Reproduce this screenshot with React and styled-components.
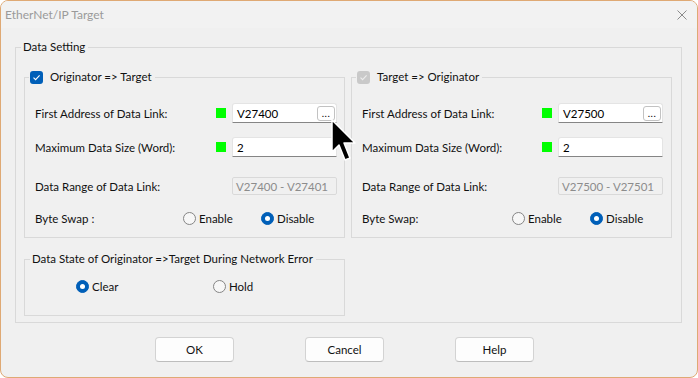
import React from "react";
import styled, { createGlobalStyle } from "styled-components";

const GlobalStyle = createGlobalStyle`
  html, body {
    margin: 0;
    padding: 0;
    background: #ffffff;
  }
  body {
    font-family: Lato, "Liberation Sans", sans-serif;
    font-size: 11.5px;
    color: #111111;
  }
  * {
    box-sizing: border-box;
  }
`;

const Window = styled.div`
  position: relative;
  width: 698px;
  height: 378px;
  border: 1px solid #dfa974;
  border-radius: 8px;
  background: #f0f0f0;
  display: flex;
  flex-direction: column;
  overflow: hidden;
`;

const TitleBar = styled.div`
  height: 27px;
  flex: none;
  display: flex;
  align-items: center;
  justify-content: space-between;
  padding: 0 10px 0 4px;
  background: #f2f2f2;
  font-size: 12px;
`;

const Title = styled.span`
  color: #9a9a9a;
`;

const Content = styled.div`
  padding: 0 15px 0 14px;
`;

const Group = styled.fieldset`
  margin: ${(p) => p.$mt || 0}px 0 0 0;
  padding: 0;
  border: 1px solid #d9d9d9;
  min-width: 0;
  width: ${(p) => (p.$w ? `${p.$w}px` : "auto")};
`;

const Legend = styled.legend`
  margin-left: ${(p) => p.$ml}px;
  padding: 0 3px 0 ${(p) => p.$pl}px;
  height: 16px;
  line-height: 16px;
`;

const LegendInner = styled.span`
  display: inline-flex;
  align-items: center;
  gap: 7px;
  height: 16px;
`;

const GroupBody = styled.div`
  padding: ${(p) => p.$pad};
`;

const Columns = styled.div`
  display: grid;
  grid-template-columns: 321px 321px;
  column-gap: 6px;
`;

const Row = styled.div`
  display: flex;
  align-items: center;
  height: ${(p) => p.$h}px;
  margin-top: ${(p) => p.$mt || 0}px;
`;

const Label = styled.span`
  flex: none;
  width: ${(p) => p.$w}px;
  white-space: nowrap;
`;

const Led = styled.span`
  flex: none;
  width: 10px;
  height: 10px;
  margin-right: 6px;
  background: #00ff00;
  visibility: ${(p) => (p.$off ? "hidden" : "visible")};
`;

const TextBox = styled.div`
  width: 105px;
  height: 20px;
  display: flex;
  align-items: center;
  justify-content: space-between;
  padding: 0 1px 0 4px;
  background: #ffffff;
  border: 1px solid #e4e4e4;
  border-bottom-color: #858585;
  border-radius: 3px 3px 0 0;
  color: #000000;
`;

const BrowseButton = styled.span`
  width: 18px;
  height: 15px;
  display: flex;
  align-items: flex-end;
  justify-content: center;
  padding-bottom: 2px;
  border: 1px solid #c2c2c2;
  border-radius: 3px;
  background: #ffffff;
  font-size: 10px;
  line-height: 10px;
  letter-spacing: 0.5px;
`;

const ReadOnlyBox = styled.div`
  width: 105px;
  height: 18px;
  display: flex;
  align-items: center;
  padding-left: 3px;
  border: 1px solid #d9d9d9;
  border-radius: 2px;
  color: #8c8c8c;
  white-space: nowrap;
`;

const RadioItem = styled.label`
  flex: none;
  display: flex;
  align-items: center;
  gap: 3px;
  width: ${(p) => p.$w}px;
`;

const RadioDot = styled.span`
  flex: none;
  width: 13px;
  height: 13px;
  border-radius: 50%;
  display: flex;
  align-items: center;
  justify-content: center;
  background: ${(p) => (p.$on ? "#005fb8" : "#f7f7f7")};
  border: 1px solid ${(p) => (p.$on ? "#005fb8" : "#858585")};

  &::after {
    content: "";
    display: ${(p) => (p.$on ? "block" : "none")};
    width: 5px;
    height: 5px;
    border-radius: 50%;
    background: #ffffff;
  }
`;

const CheckBox = styled.span`
  flex: none;
  width: 13px;
  height: 13px;
  border-radius: 3px;
  display: flex;
  align-items: center;
  justify-content: center;
  background: ${(p) => (p.$disabled ? "#c9c9c9" : "#005fb8")};
`;

const ButtonRow = styled.div`
  display: flex;
  gap: 71px;
  padding-left: 140px;
  margin-top: 14px;
`;

const Button = styled.button`
  width: 79px;
  height: 25px;
  padding: 0;
  background: #fdfdfd;
  border: 1px solid #d3d3d3;
  border-bottom-color: #bdbdbd;
  border-radius: 4px;
  font-family: inherit;
  font-size: 11.5px;
  color: #111111;
`;

const Pointer = styled.svg`
  position: absolute;
  left: 329px;
  top: 117px;
`;

const Radio = ({ on, w, children }) => (
  <RadioItem $w={w}>
    <RadioDot $on={on} />
    {children}
  </RadioItem>
);

const Check = ({ disabled }) => (
  <CheckBox $disabled={disabled}>
    <svg width="9" height="9" viewBox="0 0 9 9">
      <path
        d="M1.5 4.6 L3.6 6.6 L7.6 2.4"
        fill="none"
        stroke={disabled ? "#ededed" : "#ffffff"}
        strokeWidth="1.1"
      />
    </svg>
  </CheckBox>
);

const SettingColumn = ({ title, disabled, first, range, swapLabel, ledW, radioW }) => (
  <Group>
    <Legend $ml={4} $pl={1}>
      <LegendInner>
        <Check disabled={disabled} />
        {title}
      </LegendInner>
    </Legend>
    <GroupBody $pad="18px 6px 11px 10px">
      <Row $h={20}>
        <Label $w={ledW}>First Address of Data Link:</Label>
        <Led />
        <TextBox>
          {first}
          <BrowseButton>...</BrowseButton>
        </TextBox>
      </Row>
      <Row $h={20} $mt={14}>
        <Label $w={ledW}>Maximum Data Size (Word):</Label>
        <Led />
        <TextBox>2</TextBox>
      </Row>
      <Row $h={18} $mt={20}>
        <Label $w={ledW}>Data Range of Data Link:</Label>
        <Led $off />
        <ReadOnlyBox>{range}</ReadOnlyBox>
      </Row>
      <Row $h={16} $mt={15}>
        <Label $w={radioW}>{swapLabel}</Label>
        <Radio w={78}>Enable</Radio>
        <Radio on w={78}>
          Disable
        </Radio>
      </Row>
    </GroupBody>
  </Group>
);

export default function App() {
  return (
    <>
      <GlobalStyle />
      <Window>
        <TitleBar>
          <Title>EtherNet/IP Target</Title>
          <svg width="10" height="10" viewBox="0 0 10 10">
            <path d="M0.5 0.5 L9.5 9.5 M9.5 0.5 L0.5 9.5" stroke="#8a8a8a" strokeWidth="1" />
          </svg>
        </TitleBar>
        <Content>
          <Group $mt={11}>
            <Legend $ml={5} $pl={2}>
              Data Setting
            </Legend>
            <GroupBody $pad="14px 9px 6px 8px">
              <Columns>
                <SettingColumn
                  title="Originator => Target"
                  first="V27400"
                  range="V27400 - V27401"
                  swapLabel="Byte Swap :"
                  ledW={181}
                  radioW={148}
                />
                <SettingColumn
                  title="Target => Originator"
                  disabled
                  first="V27500"
                  range="V27500 - V27501"
                  swapLabel="Byte Swap:"
                  ledW={180}
                  radioW={150}
                />
              </Columns>
              <Group $mt={13} $w={321}>
                <Legend $ml={5} $pl={2}>
                  Data State of Originator =&gt;Target During Network Error
                </Legend>
                <GroupBody $pad="11px 0 21px 51px">
                  <Row $h={16}>
                    <Radio on w={137}>
                      Clear
                    </Radio>
                    <Radio w={80}>Hold</Radio>
                  </Row>
                </GroupBody>
              </Group>
            </GroupBody>
          </Group>
          <ButtonRow>
            <Button>OK</Button>
            <Button>Cancel</Button>
            <Button>Help</Button>
          </ButtonRow>
        </Content>
        <Pointer width="30" height="48" viewBox="0 0 30 48">
          <path
            d="M2 2 L2 34 L9 27 L15 42 L20 40 L14 25 L25 25 Z"
            fill="#000000"
            stroke="#ffffff"
            strokeWidth="1.5"
            strokeLinejoin="round"
          />
        </Pointer>
      </Window>
    </>
  );
}
